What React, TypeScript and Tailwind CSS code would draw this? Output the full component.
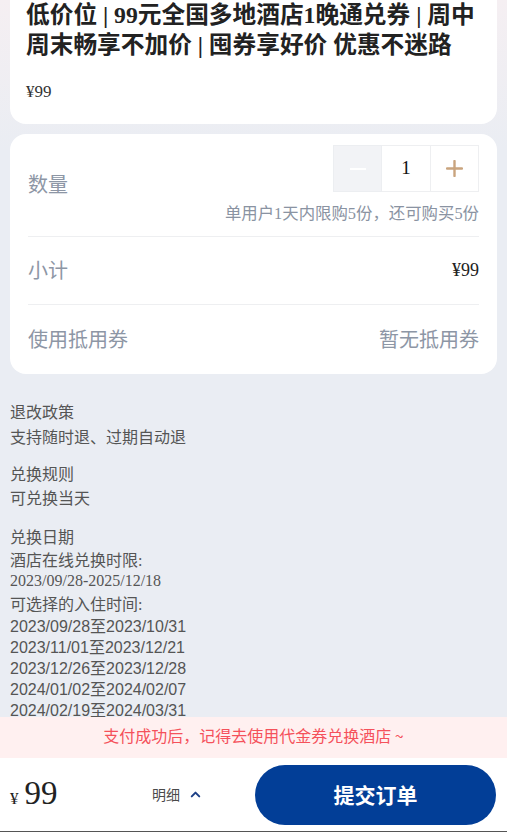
import { ChevronUp } from 'lucide-react';

const serif = "font-['Liberation_Serif','Noto_Sans_CJK_SC',serif]";

const checkInDates = [
  '2023/09/28至2023/10/31',
  '2023/11/01至2023/12/21',
  '2023/12/26至2023/12/28',
  '2024/01/02至2024/02/07',
  '2024/02/19至2024/03/31',
];

function Stepper() {
  return (
    <div className="flex h-[47px]">
      <button className="w-[49px] h-full flex items-center justify-center bg-[#f2f3f6] border border-[#eceef1]">
        <span className="block w-[16px] h-[2px] bg-white" />
      </button>
      <div className={`w-[49px] h-full flex items-center justify-center border border-l-0 border-[#eeeff1] text-[19px] text-[#111] ${serif}`}>
        1
      </div>
      <button className="w-[48px] h-full flex items-center justify-center border border-l-0 border-[#eeeff1]">
        <svg width="17" height="17" viewBox="0 0 17 17">
          <path d="M8.5 1v15M1 8.5h15" stroke="#c9a47e" strokeWidth="2.4" strokeLinecap="round" />
        </svg>
      </button>
    </div>
  );
}

export default function App() {
  return (
    <div className={`h-[832px] w-full flex flex-col overflow-hidden ${serif}`}>
      <div className="flex-1 overflow-hidden bg-[linear-gradient(180deg,#f5eff2_0px,#eaedf3_150px)] px-[10px]">
        <div className="bg-white rounded-b-[16px] pl-[16px] pr-[10px] pb-[20px]">
          <h1 className="text-[23.7px] leading-[30px] font-bold text-[#222]">
            低价位 | 99元全国多地酒店1晚通兑券 | 周中周末畅享不加价 | 囤券享好价 优惠不迷路
          </h1>
          <div className="mt-[20px] text-[17px] leading-[24px] text-[#333]">¥99</div>
        </div>

        <div className="mt-[10px] bg-white rounded-[16px] px-[18px] text-[20px] text-[#8d96a5]">
          <div className="flex items-center justify-between pt-[11px] pb-[11px] border-b border-[#eeeff1]">
            <span>数量</span>
            <div className="flex flex-col items-end">
              <Stepper />
              <div className="mt-[11px] text-[16.4px] leading-[22px] text-[#8a93a2]">
                单用户1天内限购5份，还可购买5份
              </div>
            </div>
          </div>
          <div className="flex items-center justify-between h-[68px] border-b border-[#eeeff1]">
            <span>小计</span>
            <span className="text-[18px] text-[#222]">¥99</span>
          </div>
          <div className="flex items-center justify-between h-[69px]">
            <span>使用抵用券</span>
            <span>暂无抵用券</span>
          </div>
        </div>

        <div className="mt-[26px] text-[16px] text-[#555]">
          <div className="leading-[25px]">退改政策</div>
          <div className="leading-[25px]">支持随时退、过期自动退</div>

          <div className="mt-[13px] leading-[24px]">兑换规则</div>
          <div className="leading-[24px]">可兑换当天</div>

          <div className="mt-[15px] leading-[24px]">兑换日期</div>
          <div className="leading-[22px]">酒店在线兑换时限:</div>
          <div className="leading-[18px]">2023/09/28-2025/12/18</div>
          <div className="mt-[4px] leading-[22px]">可选择的入住时间:</div>
          <div className="font-['Liberation_Sans','Noto_Sans_CJK_SC',sans-serif]">
            {checkInDates.map((d) => (
              <div key={d} className="leading-[21px]">
                {d}
              </div>
            ))}
          </div>
        </div>
      </div>

      <div className="h-[41px] shrink-0 flex items-center justify-center pb-[5px] leading-[20px] bg-[#fff0f0] text-[16px] text-[#f5515b] font-['Noto_Sans_CJK_SC',sans-serif]">
        支付成功后，记得去使用代金券兑换酒店 ~
      </div>

      <div className="h-[74px] shrink-0 bg-white flex items-center pl-[10px] pr-[11px] border-b border-[#555]">
        <div className="w-[142px] flex items-baseline text-[#222]">
          <span className="text-[17px]">¥</span>
          <span className="ml-[6px] text-[33px] leading-none">99</span>
        </div>
        <button className="flex items-center gap-[8px] text-[14px] text-[#4a4a4a] font-['Noto_Sans_CJK_SC',sans-serif]">
          明细
          <ChevronUp size={15} strokeWidth={3.2} className="text-[#1c3f86]" />
        </button>
        <button className="ml-auto w-[241px] h-[60px] rounded-full bg-[#023e97] text-white text-[21px] font-bold font-['Noto_Sans_CJK_SC',sans-serif]">
          提交订单
        </button>
      </div>
    </div>
  );
}
